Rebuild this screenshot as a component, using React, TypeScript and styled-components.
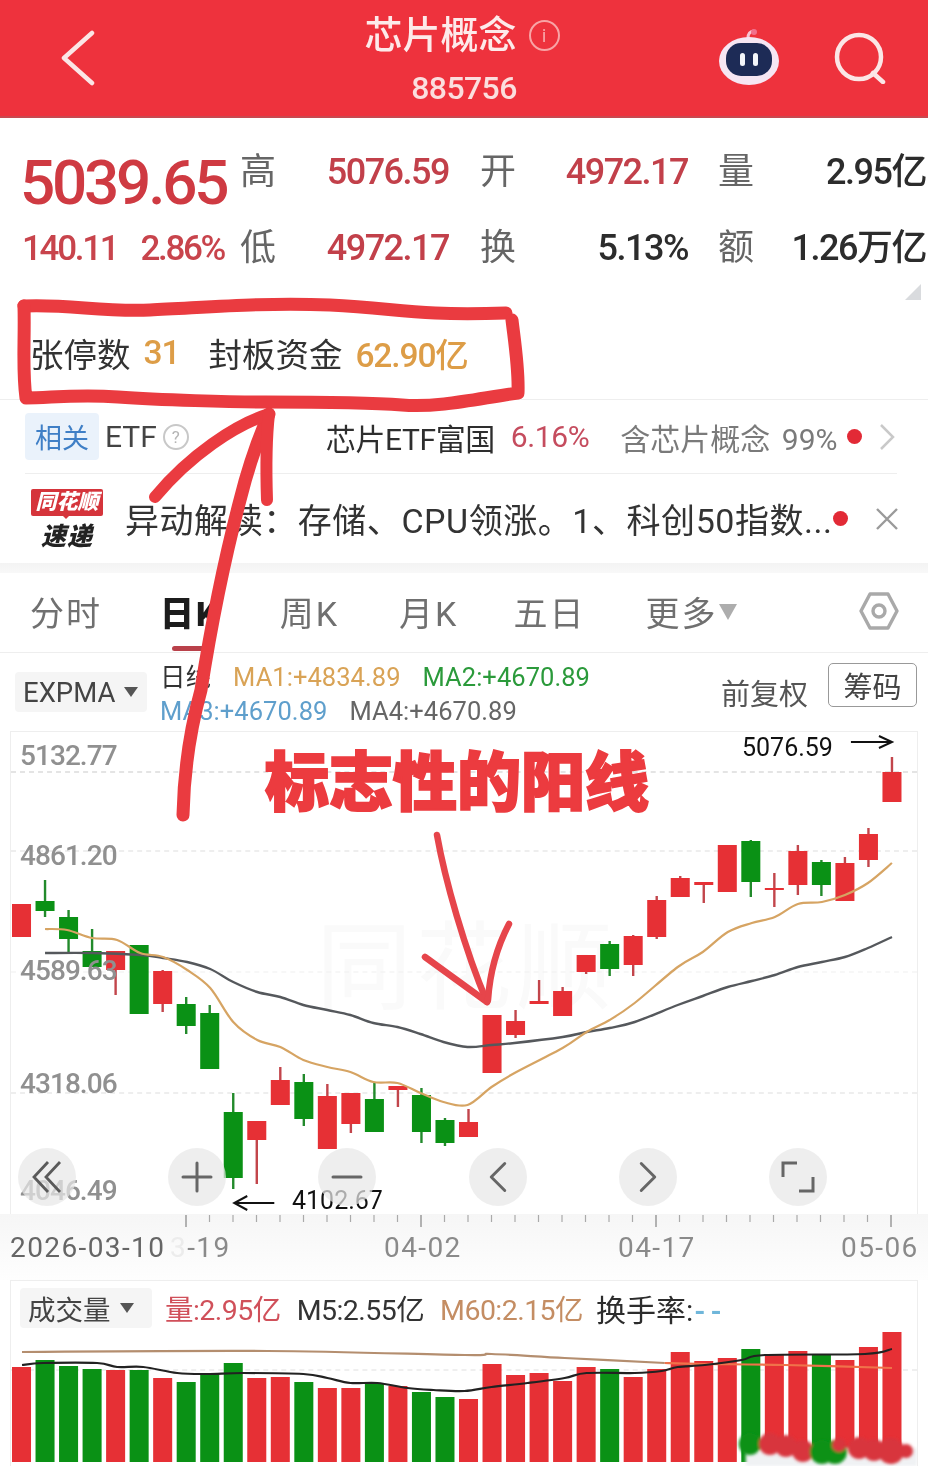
import styled, { createGlobalStyle } from "styled-components";
import { ChevronLeft, ChevronRight, Minus, Plus } from "lucide-react";

const GlobalStyle = createGlobalStyle`
  html, body {
    margin: 0;
    padding: 0;
    background: #fff;
  }
  * {
    box-sizing: border-box;
  }
  body {
    font-family: Roboto, "Noto Sans CJK SC", sans-serif;
  }
`;

const RED = "#e63035";
const RED_WICK = "#c2454b";
const GREEN = "#0a9115";
const GREEN_WICK = "#228a2b";

const Page = styled.div`
  position: relative;
  width: 928px;
  height: 1475px;
  overflow: hidden;
  background: #fff;
  color: #333;
  filter: blur(0.4px);
`;

const Header = styled.header`
  display: grid;
  grid-template-columns: 1fr 200px 1fr;
  align-items: center;
  height: 118px;
  background: #ee323d;
  border-bottom: 2px solid #c9484f;
`;

const HeaderLeft = styled.div`
  display: flex;
  padding-left: 60px;
`;

const HeaderRight = styled.div`
  display: flex;
  justify-content: flex-end;
  align-items: center;
  gap: 54px;
  padding: 0 42px 0 0;
`;

const TitleBlock = styled.div`
  display: flex;
  flex-direction: column;
  align-items: center;
  gap: 16px;
  margin-top: 4px;
`;

const TitleRow = styled.div`
  display: flex;
  align-items: center;
  gap: 12px;
  margin-left: -4px;
`;

const Title = styled.div`
  font-size: 38px;
  line-height: 40px;
  font-weight: 500;
  color: #fdeaea;
`;

const InfoMark = styled.span`
  display: flex;
  align-items: center;
  justify-content: center;
  width: 31px;
  height: 31px;
  border: 2px solid #f8a4a6;
  border-radius: 50%;
  color: #f8a4a6;
  font-size: 19px;
  line-height: 1;
`;

const Code = styled.div`
  font-size: 32px;
  line-height: 34px;
  font-weight: 500;
  letter-spacing: -0.6px;
  color: #fbdede;
`;

const Quote = styled.section`
  position: relative;
  height: 182px;
  padding: 16px 2px 0 22px;
`;

const QuoteGrid = styled.div`
  display: grid;
  grid-template-columns: 218px 36px 173px 67px 172px 66px 1fr;
  grid-auto-rows: 76px;
  align-items: center;
`;

const BigPrice = styled.div`
  margin: 22px 0 0 -2px;
  font-size: 62px;
  line-height: 62px;
  font-weight: 500;
  letter-spacing: -3.2px;
  color: #cf3a42;
`;

const Change = styled.div`
  display: flex;
  gap: 23px;
  font-size: 35px;
  font-weight: 500;
  letter-spacing: -2.3px;
  color: #c8444c;
`;

const StatLabel = styled.div`
  justify-self: end;
  font-size: 36px;
  line-height: 40px;
  color: #666;
`;

const StatValue = styled.div<{ $up?: boolean }>`
  justify-self: end;
  font-size: 36px;
  line-height: 40px;
  font-weight: 500;
  letter-spacing: -1.5px;
  color: ${(p) => (p.$up ? "#c2404a" : "#2c2c2c")};
`;

const CornerMark = styled.div`
  position: absolute;
  right: 7px;
  bottom: 0;
  width: 16px;
  height: 16px;
  background: #d9dbde;
  clip-path: polygon(100% 0, 100% 100%, 0 100%);
`;

const LimitRow = styled.section`
  display: flex;
  align-items: center;
  height: 100px;
  padding: 6px 0 0 30px;
  border-bottom: 1px solid #eee;
  font-size: 33.5px;
  color: #333;
`;

const LimitValue = styled.span<{ $gapRight: number }>`
  margin: 0 ${(p) => p.$gapRight}px 0 13px;
  font-weight: 500;
  letter-spacing: -1.1px;
  color: #dd9d47;
`;

const EtfRow = styled.section`
  display: flex;
  align-items: center;
  height: 74px;
  margin: 0 31px 0 25px;
  border-bottom: 1px solid #eee;
  font-size: 30px;
  white-space: nowrap;
`;

const RelatedTag = styled.span`
  display: flex;
  flex: none;
  align-items: center;
  justify-content: center;
  width: 74px;
  height: 47px;
  border-radius: 4px;
  background: #eaf2fb;
  font-size: 27px;
  color: #3f7fc6;
`;

const EtfLabel = styled.span`
  margin-left: 6px;
  color: #444;
`;

const HelpMark = styled.span`
  display: flex;
  flex: none;
  align-items: center;
  justify-content: center;
  width: 26px;
  height: 26px;
  margin: 0 137px 0 6px;
  border: 2px solid #c8c8c8;
  border-radius: 50%;
  color: #b5b5b5;
  font-size: 17px;
`;

const FundName = styled.span`
  color: #2e2e2e;
  letter-spacing: -0.4px;
`;

const FundPct = styled.span`
  margin: 0 31px 0 16px;
  color: #c54c5e;
  letter-spacing: -0.4px;
`;

const FundHold = styled.span`
  margin-right: 10px;
  color: #7a7a7a;
  word-spacing: 4px;
`;

const Dot = styled.span`
  flex: none;
  width: 15px;
  height: 15px;
  border-radius: 50%;
  background: #e22a36;
`;

const RowChevron = styled.span`
  display: flex;
  margin-left: 17px;
`;

const NewsRow = styled.section`
  display: flex;
  align-items: center;
  height: 89px;
  padding: 0 30px 0 31px;
`;

const Logo = styled.div`
  flex: none;
  width: 72px;
  margin-right: 22px;
  text-align: center;
`;

const LogoBadge = styled.div`
  position: relative;
  height: 27px;
  border-radius: 2px;
  background: #d5343b;
  color: #fff;
  font-size: 21px;
  line-height: 27px;
  font-weight: 900;
  font-style: italic;
  white-space: nowrap;

  &::after {
    content: "";
    position: absolute;
    left: 30px;
    bottom: -8px;
    border: 5px solid transparent;
    border-top: 5px solid #d5343b;
  }
`;

const LogoText = styled.div`
  margin-top: 8px;
  font-size: 25px;
  line-height: 25px;
  font-weight: 900;
  font-style: italic;
  letter-spacing: 1px;
  color: #222;
`;

const NewsText = styled.div`
  flex: 1;
  font-size: 34px;
  white-space: nowrap;
  letter-spacing: 0.55px;
  color: #333;
`;

const CloseMark = styled.span`
  display: flex;
  margin-left: 27px;
`;

const Band = styled.div`
  height: 10px;
  background: linear-gradient(#f3f3f3, #f8f8f8);
`;

const Tabs = styled.nav`
  position: relative;
  display: flex;
  align-items: center;
  gap: 60px;
  height: 80px;
  padding: 0 30px 3px;
  border-bottom: 1px solid #eee;
`;

const Tab = styled.span<{ $active?: boolean; $pull?: number }>`
  position: relative;
  margin-right: ${(p) => -(p.$pull ?? 0)}px;
  font-size: 34px;
  letter-spacing: 2px;
  font-weight: ${(p) => (p.$active ? 900 : 400)};
  color: ${(p) => (p.$active ? "#1c1c1c" : "#707070")};

  &::after {
    content: "";
    display: ${(p) => (p.$active ? "block" : "none")};
    position: absolute;
    left: 12px;
    bottom: -15px;
    width: 32px;
    height: 5px;
    border-radius: 3px;
    background: #b9414a;
  }
`;

const TabCaret = styled.span`
  display: inline-block;
  margin-left: 2px;
  border: 9px solid transparent;
  border-top: 16px solid #adadad;
  border-bottom: 0;
  vertical-align: 6px;
`;

const GearButton = styled.span`
  display: flex;
  margin-left: auto;
  margin-right: -1px;
`;

const IndicatorRow = styled.section`
  display: flex;
  align-items: center;
  height: 78px;
  padding: 0 11px 0 15px;
`;

const SelectBox = styled.div<{ $w: number }>`
  display: flex;
  align-items: center;
  gap: 9px;
  width: ${(p) => p.$w}px;
  height: 40px;
  padding-left: 8px;
  border-radius: 4px;
  background: #f5f5f5;
  color: #444;
  font-size: 27.5px;
  white-space: nowrap;
`;

const SmallCaret = styled.span`
  border: 7px solid transparent;
  border-top: 10px solid #555;
  border-bottom: 0;
`;

const MaBlock = styled.div`
  display: flex;
  flex-direction: column;
  gap: 3px;
  margin: 4px 0 0 13px;
  font-size: 25.5px;
  line-height: 31px;
  letter-spacing: 0.05px;
`;

const MaLine = styled.div`
  display: flex;
  gap: 22px;
  white-space: nowrap;
`;

const MaText = styled.span<{ $c: string }>`
  color: ${(p) => p.$c};
`;

const AdjustLabel = styled.span`
  margin-left: auto;
  font-size: 29px;
  color: #555;
`;

const ChipButton = styled.span`
  display: flex;
  align-items: center;
  justify-content: center;
  width: 89px;
  height: 44px;
  margin: -14px 0 0 20px;
  border: 1px solid #999;
  border-radius: 5px;
  font-size: 29px;
  color: #444;
`;

const ChartPanel = styled.section`
  position: relative;
  height: 483px;
  margin: 0 10px;
  border: 1px solid #eee;
  border-bottom: 0;
`;

const ChartSvg = styled.svg`
  position: relative;
  display: block;
  width: 100%;
  height: 100%;
`;

const Watermark = styled.div`
  position: absolute;
  left: 305px;
  top: 186px;
  font-size: 96px;
  line-height: 100px;
  letter-spacing: 4px;
  color: #fafafa;
`;

const PriceLabel = styled.span<{ $top: number }>`
  position: absolute;
  left: 9px;
  top: ${(p) => p.$top}px;
  font-size: 28px;
  line-height: 32px;
  font-weight: 500;
  letter-spacing: -0.95px;
  color: #909090;
`;

const ExtremeLabel = styled.span<{ $left: number; $top: number }>`
  position: absolute;
  left: ${(p) => p.$left}px;
  top: ${(p) => p.$top}px;
  font-size: 25px;
  line-height: 28px;
  color: #111;
`;

const Controls = styled.div`
  position: absolute;
  left: 7px;
  right: 90px;
  bottom: 8px;
  display: flex;
  justify-content: space-between;
`;

const RoundButton = styled.span`
  display: flex;
  align-items: center;
  justify-content: center;
  width: 58px;
  height: 58px;
  border-radius: 50%;
  background: rgba(232, 232, 232, 0.72);
  color: #666;
`;

const AxisSection = styled.section`
  height: 66px;
  background: linear-gradient(#f6f6f6, #fefefe);
`;

const TickSvg = styled.svg`
  display: block;
  width: 928px;
  height: 14px;
`;

const DateRow = styled.div`
  display: grid;
  grid-template-columns: 160px 214px 234px 223px auto;
  padding: 2px 0 0 10px;
  font-size: 28px;
  line-height: 36px;
  letter-spacing: 1.4px;
`;

const DateText = styled.span<{ $strong?: boolean }>`
  color: ${(p) => (p.$strong ? "#666" : "#8a8a8a")};
`;

const Faded = styled.span`
  color: #ececec;
`;

const VolumePanel = styled.section`
  height: 186px;
  margin: 0 10px;
  border: 1px solid #eee;
  border-bottom: 0;
`;

const VolumeHeader = styled.div`
  display: flex;
  align-items: center;
  gap: 16px;
  height: 49px;
  padding: 4px 0 0 9px;
  font-size: 28.5px;
  white-space: nowrap;
`;

const VolumeValue = styled.span<{ $c: string; $first?: boolean }>`
  margin-left: ${(p) => (p.$first ? -3 : 0)}px;
  letter-spacing: -0.55px;
  color: ${(p) => p.$c};
`;

const Turnover = styled.span`
  margin-left: -3px;
`;

const TurnoverLabel = styled.span`
  font-size: 30px;
  letter-spacing: 0;
  color: #2c2c2c;
`;

const TurnoverDash = styled.span`
  margin-left: 1px;
  font-weight: 700;
  letter-spacing: 5px;
  color: #6fb6da;
`;

const VolumeSvg = styled.svg`
  display: block;
  width: 100%;
  height: 136px;
`;

const Annotations = styled.svg`
  position: absolute;
  left: 0;
  top: 0;
  width: 928px;
  height: 1475px;
  pointer-events: none;
`;

const Headline = styled.div`
  position: absolute;
  left: 265px;
  top: 739px;
  font-family: "Noto Sans CJK SC", sans-serif;
  font-size: 64px;
  line-height: 76px;
  font-weight: 900;
  white-space: nowrap;
  color: #ec3b3f;
  -webkit-text-stroke: 2px #ec3b3f;
`;

// each candle: red?, body top, body bottom, wick top, wick bottom (page y)
const candles: [boolean, number, number, number, number][] = [
  [true, 904, 937, 904, 937],
  [false, 901, 911, 880, 917],
  [false, 917, 939, 910, 952],
  [false, 951, 967, 929, 967],
  [true, 951, 970, 951, 995],
  [false, 945, 1014, 945, 1014],
  [true, 971, 1004, 970, 1012],
  [false, 1004, 1026, 997, 1034],
  [false, 1013, 1069, 1005, 1069],
  [false, 1112, 1178, 1093, 1189],
  [true, 1121, 1140, 1121, 1184],
  [true, 1080, 1105, 1067, 1105],
  [false, 1082, 1119, 1074, 1126],
  [true, 1096, 1149, 1084, 1149],
  [true, 1093, 1124, 1093, 1133],
  [false, 1099, 1132, 1082, 1132],
  [true, 1086, 1090, 1086, 1107],
  [false, 1095, 1132, 1088, 1143],
  [false, 1120, 1143, 1118, 1146],
  [true, 1122, 1137, 1109, 1137],
  [true, 1015, 1073, 1015, 1073],
  [true, 1021, 1035, 1010, 1038],
  [true, 1001, 1004, 980, 1004],
  [true, 991, 1016, 987, 1016],
  [true, 955, 972, 955, 974],
  [false, 944, 969, 941, 976],
  [true, 936, 965, 935, 976],
  [true, 900, 937, 896, 939],
  [true, 878, 897, 876, 897],
  [true, 882, 885, 882, 903],
  [true, 845, 892, 845, 892],
  [false, 841, 882, 840, 897],
  [true, 888, 890, 873, 907],
  [true, 851, 885, 845, 895],
  [false, 862, 885, 860, 896],
  [true, 863, 901, 857, 901],
  [true, 834, 860, 828, 867],
  [true, 772, 802, 757, 802],
];

// volume bar: red?, top y
const volumes: [boolean, number][] = [
  [true, 1367], [false, 1360], [false, 1366], [false, 1369], [true, 1370],
  [false, 1370], [true, 1378], [false, 1382], [false, 1374], [false, 1363],
  [true, 1378], [true, 1377], [false, 1382], [true, 1388], [true, 1388],
  [false, 1384], [true, 1386], [false, 1392], [false, 1397], [true, 1399],
  [true, 1364], [true, 1375], [true, 1373], [true, 1381], [true, 1367],
  [false, 1369], [true, 1377], [true, 1369], [true, 1352], [true, 1361],
  [true, 1358], [false, 1349], [true, 1354], [true, 1351], [false, 1354],
  [true, 1360], [true, 1347], [true, 1332],
];

const ma1 =
  "45,929 67,930 92,938 117,940 140,953 163,957 187,970 210,988 233,1022 257,1040 280,1047 303,1060 327,1067 350,1072 373,1082 397,1083 420,1093 443,1102 467,1105 491,1087 514,1073 562,1048 586,1032 609,1020 634,1003 677,967 702,952 727,932 751,923 774,917 797,904 821,902 844,895 867,883 891,863";
const ma2 =
  "45,953 93,953 140,955 163,958 187,962 210,969 233,982 257,992 280,997 303,1005 327,1010 350,1015 373,1023 397,1027 420,1034 443,1042 467,1047 491,1045 514,1043 562,1037 586,1032 609,1028 634,1022 677,1005 702,996 727,987 751,981 774,975 797,967 821,962 844,957 867,948 891,937";
const volMa60a = "22,1352 267,1351 464,1355 491,1354 564,1358 664,1363";
const volMa60b = "664,1363 704,1364 784,1365 891,1368";
const volMa5 =
  "22,1365 43,1363 97,1363 117,1367 143,1367 177,1373 207,1374 243,1373 303,1374 327,1378 350,1383 377,1383 407,1388 433,1390 464,1391 491,1387 527,1383 564,1378 586,1373 634,1373 661,1371 677,1367 704,1365 741,1360 764,1355 864,1354 891,1349";

const barX = (i: number) => 21.5 + i * 23.5;

// catmull-rom through the points so the average lines don't look faceted
const smooth = (line: string) => {
  const pts = line.split(" ").map((s) => s.split(",").map(Number));
  let d = `M${pts[0][0]} ${pts[0][1]}`;
  for (let i = 0; i < pts.length - 1; i++) {
    const a = pts[Math.max(i - 1, 0)];
    const b = pts[i];
    const c = pts[i + 1];
    const e = pts[Math.min(i + 2, pts.length - 1)];
    const c1x = (b[0] + (c[0] - a[0]) / 6).toFixed(1);
    const c1y = (b[1] + (c[1] - a[1]) / 6).toFixed(1);
    const c2x = (c[0] - (e[0] - b[0]) / 6).toFixed(1);
    const c2y = (c[1] - (e[1] - b[1]) / 6).toFixed(1);
    d += `C${c1x} ${c1y} ${c2x} ${c2y} ${c[0]} ${c[1]}`;
  }
  return d;
};

const blobs: [number, number, number, boolean][] = [
  [749, 1444, 11, false], [769, 1444, 11, true], [785, 1446, 11, true],
  [802, 1451, 11, true], [821, 1452, 12, false], [834, 1452, 12, false],
  [838, 1445, 7, true], [858, 1448, 11, true], [873, 1450, 11, true],
  [890, 1451, 13, true], [905, 1451, 7, true],
];

const Candles = () => (
  <>
    {candles.map(([red, top, bottom, wickTop, wickBottom], i) => (
      <g key={i}>
        <line
          x1={barX(i)}
          x2={barX(i)}
          y1={wickTop}
          y2={wickBottom}
          stroke={red ? RED_WICK : GREEN_WICK}
          strokeWidth={2.4}
        />
        <rect
          x={barX(i) - 9.5}
          y={top}
          width={19}
          height={bottom - top}
          fill={red ? RED : GREEN}
        />
      </g>
    ))}
  </>
);

const App = () => {
  return (
    <Page>
      <GlobalStyle />
      <Header>
        <HeaderLeft>
          <svg width="36" height="56" viewBox="0 0 36 56" fill="none">
            <path d="M32 3 4 28l28 25" stroke="#fbe6e6" strokeWidth="4.5" strokeLinecap="round" strokeLinejoin="round" />
          </svg>
        </HeaderLeft>
        <TitleBlock>
          <TitleRow>
            <Title>芯片概念</Title>
            <InfoMark>i</InfoMark>
          </TitleRow>
          <Code>885756</Code>
        </TitleBlock>
        <HeaderRight>
          <svg width="62" height="60" viewBox="0 0 62 60">
            <path d="M30 10c0-4 2-7 6-7" stroke="#f7c4d2" strokeWidth="3" fill="none" />
            <circle cx="36" cy="4" r="3" fill="#f26f8c" />
            <ellipse cx="31" cy="33" rx="30" ry="24" fill="#f6e6f3" />
            <rect x="8" y="15" width="46" height="33" rx="15" fill="#1d2b56" />
            <rect x="22" y="25" width="5" height="13" rx="2.5" fill="#f4f6fb" />
            <rect x="35" y="25" width="5" height="13" rx="2.5" fill="#f4f6fb" />
          </svg>
          <svg width="52" height="52" viewBox="0 0 52 52" fill="none" stroke="#fbe6e6" strokeWidth="4.5" strokeLinecap="round">
            <ellipse cx="25" cy="25" rx="22" ry="22" />
            <path d="M39 41 49 50" />
          </svg>
        </HeaderRight>
      </Header>

      <Quote>
        <QuoteGrid>
          <BigPrice>5039.65</BigPrice>
          <StatLabel>高</StatLabel>
          <StatValue $up>5076.59</StatValue>
          <StatLabel>开</StatLabel>
          <StatValue $up>4972.17</StatValue>
          <StatLabel>量</StatLabel>
          <StatValue>2.95亿</StatValue>
          <Change>
            <span>140.11</span>
            <span>2.86%</span>
          </Change>
          <StatLabel>低</StatLabel>
          <StatValue $up>4972.17</StatValue>
          <StatLabel>换</StatLabel>
          <StatValue>5.13%</StatValue>
          <StatLabel>额</StatLabel>
          <StatValue>1.26万亿</StatValue>
        </QuoteGrid>
        <CornerMark />
      </Quote>

      <LimitRow>
        张停数
        <LimitValue $gapRight={29}>31</LimitValue>
        封板资金
        <LimitValue $gapRight={0}>62.90亿</LimitValue>
      </LimitRow>

      <EtfRow>
        <RelatedTag>相关</RelatedTag>
        <EtfLabel>ETF</EtfLabel>
        <HelpMark>?</HelpMark>
        <FundName>芯片ETF富国</FundName>
        <FundPct>6.16%</FundPct>
        <FundHold>含芯片概念 99%</FundHold>
        <Dot />
        <RowChevron>
          <svg width="16" height="28" viewBox="0 0 16 28" fill="none">
            <path d="m2 2 12 12L2 26" stroke="#c9c9c9" strokeWidth="2.5" />
          </svg>
        </RowChevron>
      </EtfRow>

      <NewsRow>
        <Logo>
          <LogoBadge>同花顺</LogoBadge>
          <LogoText>速递</LogoText>
        </Logo>
        <NewsText>异动解读：存储、CPU领涨。1、科创50指数...</NewsText>
        <Dot />
        <CloseMark>
          <svg width="24" height="24" viewBox="0 0 24 24" fill="none" stroke="#9a9a9a" strokeWidth="2.4">
            <path d="m2 2 20 20M22 2 2 22" />
          </svg>
        </CloseMark>
      </NewsRow>
      <Band />

      <Tabs>
        <Tab $pull={2}>分时</Tab>
        <Tab $active>日K</Tab>
        <Tab>周K</Tab>
        <Tab $pull={5}>月K</Tab>
        <Tab>五日</Tab>
        <Tab>
          更多
          <TabCaret />
        </Tab>
        <GearButton>
          <svg width="40" height="40" viewBox="0 0 40 40" fill="none" stroke="#a9a9a9" strokeWidth="3.4">
            <path d="M11 3h18l9 17-9 17H11L2 20z" strokeLinejoin="round" />
            <circle cx="20" cy="20" r="6" />
          </svg>
        </GearButton>
      </Tabs>

      <IndicatorRow>
        <SelectBox $w={132}>
          EXPMA
          <SmallCaret />
        </SelectBox>
        <MaBlock>
          <MaLine>
            <MaText $c="#333">日线</MaText>
            <MaText $c="#d9a356">MA1:+4834.89</MaText>
            <MaText $c="#2b9a3b">MA2:+4670.89</MaText>
          </MaLine>
          <MaLine>
            <MaText $c="#5f9fcc">MA3:+4670.89</MaText>
            <MaText $c="#666">MA4:+4670.89</MaText>
          </MaLine>
        </MaBlock>
        <AdjustLabel>前复权</AdjustLabel>
        <ChipButton>筹码</ChipButton>
      </IndicatorRow>

      <ChartPanel>
        <Watermark>同花顺</Watermark>
        <ChartSvg viewBox="11 732 905 482" preserveAspectRatio="none">
          <g fill="none" strokeDasharray="5 4">
            <line x1="11" x2="916" y1="772" y2="772" stroke="#c9c9c9" />
            <line x1="11" x2="916" y1="851" y2="851" stroke="#dedede" />
            <line x1="11" x2="916" y1="972" y2="972" stroke="#f0f0f0" />
            <line x1="11" x2="916" y1="1093" y2="1093" stroke="#dedede" />
          </g>
          <Candles />
          <path d={smooth(ma2)} fill="none" stroke="#55585c" strokeWidth="2.4" />
          <path d={smooth(ma1)} fill="none" stroke="#d6a463" strokeWidth="2.2" />
          <g fill="none" stroke="#111" strokeWidth="2">
            <path d="M850 742h41m-13-6 13 6-13 6" />
            <path d="M274 1203h-40m13-7-13 7 13 7" />
          </g>
        </ChartSvg>
        <PriceLabel $top={8}>5132.77</PriceLabel>
        <PriceLabel $top={108}>4861.20</PriceLabel>
        <PriceLabel $top={223}>4589.63</PriceLabel>
        <PriceLabel $top={336}>4318.06</PriceLabel>
        <PriceLabel $top={443}>4046.49</PriceLabel>
        <ExtremeLabel $left={731} $top={2}>5076.59</ExtremeLabel>
        <ExtremeLabel $left={281} $top={455}>4102.67</ExtremeLabel>
        <Controls>
          <RoundButton>
            <svg width="32" height="34" viewBox="0 0 32 34" fill="none" stroke="#5a5a5a" strokeWidth="2.8">
              <path d="M17 2 3 17l14 15M29 2 15 17l14 15" />
            </svg>
          </RoundButton>
          <RoundButton>
            <Plus size={48} strokeWidth={1.5} />
          </RoundButton>
          <RoundButton>
            <Minus size={48} strokeWidth={1.5} />
          </RoundButton>
          <RoundButton>
            <ChevronLeft size={54} strokeWidth={1.3} />
          </RoundButton>
          <RoundButton>
            <ChevronRight size={54} strokeWidth={1.3} />
          </RoundButton>
          <RoundButton>
            <svg width="34" height="32" viewBox="0 0 34 32" fill="none" stroke="#666" strokeWidth="3">
              <path d="M2 16V2h14M32 16v14H18" />
            </svg>
          </RoundButton>
        </Controls>
      </ChartPanel>

      <AxisSection>
        <TickSvg viewBox="0 1214 928 14">
          {candles.map((_, i) =>
            i < 7 ? null : (
              <line
                key={i}
                x1={barX(i)}
                x2={barX(i)}
                y1={1215}
                y2={(i - 7) % 10 === 0 ? 1227 : 1222}
                stroke="#aaa"
                strokeWidth={(i - 7) % 10 === 0 ? 1.8 : 1.2}
              />
            ),
          )}
        </TickSvg>
        <DateRow>
          <DateText $strong>2026-03-10</DateText>
          <DateText>
            <Faded>3</Faded>-19
          </DateText>
          <DateText>04-02</DateText>
          <DateText>04-17</DateText>
          <DateText>05-06</DateText>
        </DateRow>
      </AxisSection>

      <VolumePanel>
        <VolumeHeader>
          <SelectBox $w={132}>
            成交量
            <SmallCaret />
          </SelectBox>
          <VolumeValue $c="#d0505a" $first>量:2.95亿</VolumeValue>
          <VolumeValue $c="#333">M5:2.55亿</VolumeValue>
          <VolumeValue $c="#c48d63">M60:2.15亿</VolumeValue>
          <Turnover>
            <TurnoverLabel>换手率:</TurnoverLabel>
            <TurnoverDash>--</TurnoverDash>
          </Turnover>
        </VolumeHeader>
        <VolumeSvg viewBox="11 1330 905 136" preserveAspectRatio="none">
          <defs>
            <filter id="smudge" x="-30%" y="-30%" width="160%" height="160%">
              <feGaussianBlur stdDeviation="1.4" />
            </filter>
          </defs>
          <line x1="11" x2="916" y1="1370" y2="1370" stroke="#e0e0e0" strokeDasharray="5 4" />
          {volumes.map(([red, top], i) => (
            <rect key={i} x={barX(i) - 9.5} y={top} width={19} height={1462 - top} fill={red ? RED : GREEN} />
          ))}
          <rect x="745" y="1448" width="171" height="18" fill="#f0f2f4" filter="url(#smudge)" />
          <g filter="url(#smudge)">
            {blobs.map(([cx, cy, r, red], i) => (
              <circle key={i} cx={cx} cy={cy} r={r} fill={red ? "#d8353d" : "#0a9115"} />
            ))}
          </g>
          <path d={smooth(volMa60a)} fill="none" stroke="#b48e6f" strokeWidth="2.2" />
          <path d={smooth(volMa60b)} fill="none" stroke="#f0724a" strokeWidth="2.2" />
          <path d={smooth(volMa5)} fill="none" stroke="#222" strokeWidth="2.2" />
        </VolumeSvg>
      </VolumePanel>

      <Headline>标志性的阳线</Headline>
      <Annotations viewBox="0 0 928 1475" fill="none" strokeLinecap="round" strokeLinejoin="round">
        <g stroke="#ea3b40" strokeWidth="13">
          <path d="M24 306C70 304 100 312 150 310S260 302 330 305 410 316 506 313" />
          <path d="M512 320C515 345 519 370 518 393 480 398 440 408 402 405S300 402 266 402 160 400 118 397 50 398 26 398C22 370 25 340 24 306" />
          <path d="M183 815C184 770 190 730 201 690 212 620 225 557 240 500 250 460 262 430 269 414" />
          <path d="M155 497C190 455 235 425 269 414" strokeWidth="12" />
          <path d="M267 500C266 470 266 440 269 414" strokeWidth="12" />
        </g>
        <g stroke="#e6454b" strokeWidth="6.5">
          <path d="M437 835C445 880 465 950 487 1002" />
          <path d="M425 957 487 1002" />
          <path d="M509 924C498 945 490 970 488 1000" />
        </g>
      </Annotations>
    </Page>
  );
};

export default App;
